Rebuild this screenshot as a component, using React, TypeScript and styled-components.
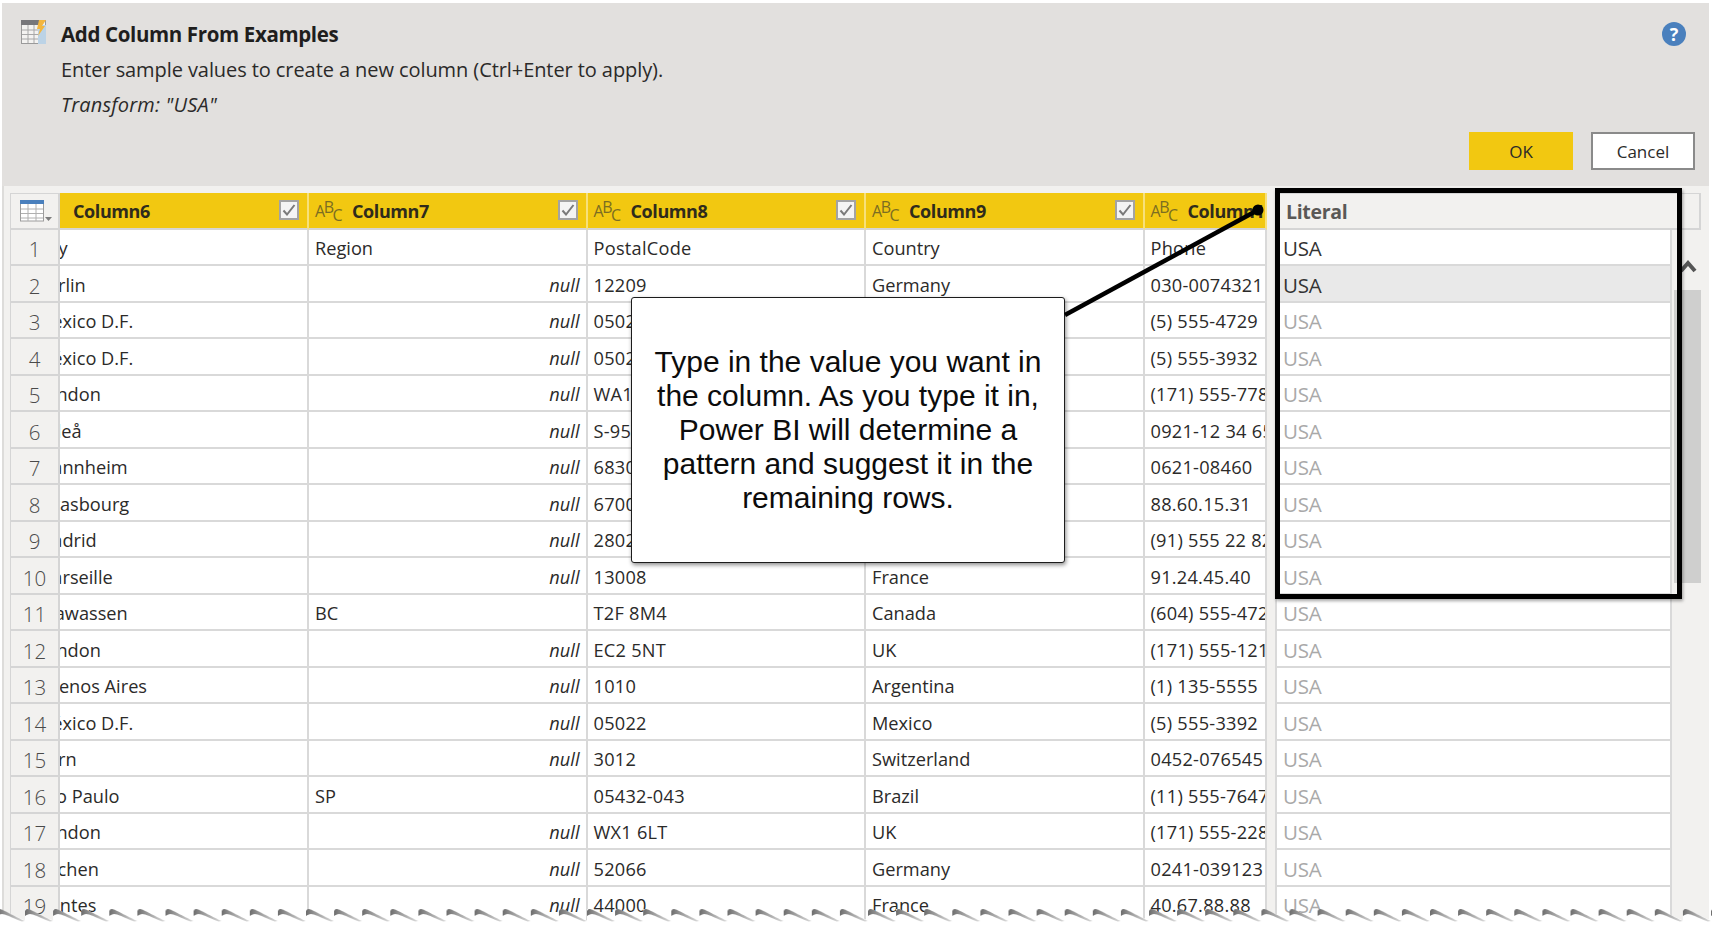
import { Fragment } from 'react'
import styled, { createGlobalStyle } from 'styled-components'

const GlobalStyle = createGlobalStyle`
  html, body {
    margin: 0;
    padding: 0;
    background: #fff;
  }
  * {
    box-sizing: border-box;
  }
`

const uiFont = `'Open Sans', 'Noto Sans', sans-serif`

const Page = styled.div`
  position: relative;
  width: 1712px;
  height: 928px;
  overflow: hidden;
  background: #fff;
  padding: 3px 3px 0 2px;
  font-family: ${uiFont};
  color: #2b2a29;
`

const Header = styled.header`
  height: 183px;
  padding: 14px 14px 16px 19px;
  background: #e2e0de;
  display: flex;
  flex-direction: column;
`

const TopRow = styled.div`
  display: flex;
  align-items: flex-start;
  height: 105px;
`

const AddColumnIcon = styled.svg`
  flex: none;
  margin-top: 3px;
`

const HeaderText = styled.div`
  margin-left: 14px;
  flex: 1;
`

const Title = styled.div`
  font-size: 20.5px;
  font-weight: 700;
  line-height: 35px;
  letter-spacing: -0.36px;
  color: #1f1e1d;
`

const Line = styled.div<{ $italic?: boolean }>`
  font-size: 20px;
  line-height: 35px;
  letter-spacing: ${p => (p.$italic ? '0.2px' : '-0.08px')};
  font-style: ${p => (p.$italic ? 'italic' : 'normal')};
`

const Help = styled.div`
  width: 24px;
  height: 24px;
  margin: 5px 9px 0 0;
  border-radius: 50%;
  background: #4a80bd;
  color: #fff;
  font-size: 18px;
  font-weight: 700;
  line-height: 24px;
  text-align: center;
`

const Buttons = styled.div`
  display: flex;
  justify-content: flex-end;
  gap: 18px;
  margin-top: 10px;
`

const Button = styled.div<{ $primary?: boolean }>`
  width: 104px;
  height: 38px;
  display: flex;
  align-items: center;
  justify-content: center;
  font-size: 17px;
  background: ${p => (p.$primary ? '#f2c811' : '#fff')};
  border: ${p => (p.$primary ? 'none' : '2px solid #8a8a8a')};
`

const Panel = styled.div`
  height: 742px;
  padding: 7px 8px 0 6px;
  background: #f2f1ef;
  border-left: 2px solid #dddcda;
  display: flex;
  align-items: flex-start;
`

const DataGrid = styled.div`
  display: grid;
  grid-template-columns: 50px 249px 278.5px 278.5px 278.5px 122.5px;
  grid-template-rows: 36.5px;
  grid-auto-rows: 36.5px;
`

const Corner = styled.div`
  background: #f2f1ef;
  border: 1px solid #d5d5d5;
  border-width: 1px 2px 2px 1px;
  padding: 6px 0 0 9px;
`

const HeadCell = styled.div<{ $first?: boolean }>`
  display: flex;
  align-items: center;
  min-width: 0;
  overflow: hidden;
  background: #f2c811;
  border-right: 2px solid #f7e07a;
  border-bottom: 2px solid #d5d5d5;
  padding: 0 8px 0 ${p => (p.$first ? '13px' : '6px')};
`

const TypeIcon = styled.span`
  display: inline-flex;
  flex: none;
  width: 25px;
  margin-right: 12px;
  font-size: 16px;
  letter-spacing: -1.5px;
  color: #7b6d22;
  line-height: 1;
`

const TypeLetter = styled.span<{ $shift: number }>`
  transform: translateY(${p => p.$shift}px);
`

const ColumnName = styled.span`
  flex: 1;
  font-size: 18px;
  font-weight: 700;
  letter-spacing: -0.4px;
  white-space: nowrap;
  color: #2f2b1c;
  padding-top: 2px;
`

const CheckBox = styled.span`
  flex: none;
  width: 20px;
  height: 20px;
  background: #f4f4f4;
  border: 2px solid #a3a3a3;
  display: flex;
  align-items: center;
  justify-content: center;
`

const RowNumber = styled.div`
  background: #f2f1ef;
  border: 1px solid #d5d5d5;
  border-width: 0 2px 2px 1px;
  font-size: 20.5px;
  font-weight: 300;
  color: #4a4a4a;
  display: flex;
  align-items: center;
  justify-content: center;
  padding-top: 5px;
`

const Cell = styled.div<{ $null?: boolean; $numeric?: boolean }>`
  min-width: 0;
  overflow: hidden;
  white-space: nowrap;
  background: #fff;
  border-right: 2px solid #d9d9d9;
  border-bottom: 2px solid #d9d9d9;
  padding: 3px 6px 0;
  display: flex;
  align-items: center;
  justify-content: ${p => (p.$null ? 'flex-end' : 'flex-start')};
  font-size: 18.2px;
  letter-spacing: ${p => (p.$numeric ? '0.25px' : '0')};
  font-style: ${p => (p.$null ? 'italic' : 'normal')};
`

/* the city column is scrolled sideways, so every value loses its first letters */
const ScrolledText = styled.span`
  margin-left: -30px;
`

const LiteralPane = styled.div`
  width: 426px;
  margin-left: 8px;
`

const LiteralHeader = styled.div`
  height: 36.5px;
  display: flex;
  align-items: center;
  padding: 2px 0 0 9px;
  background: #f2f1ef;
  border: 2px solid #d5d5d5;
  border-top-width: 1px;
  font-size: 19.5px;
  font-weight: 700;
  letter-spacing: -0.3px;
  color: #5a5856;
`

const LiteralBody = styled.div`
  display: flex;
  align-items: flex-start;
`

const LiteralCells = styled.div`
  width: 397px;
  flex: none;
`

const LiteralCell = styled.div<{ $state: 'typed' | 'active' | 'suggested' }>`
  height: 36.5px;
  display: flex;
  align-items: center;
  padding: 3px 0 0 6px;
  background: ${p => (p.$state === 'active' ? '#e9e9e9' : '#fff')};
  border: 2px solid #d9d9d9;
  border-width: 0 2px 2px 2px;
  font-size: 20.5px;
  letter-spacing: -0.2px;
  color: ${p => (p.$state === 'suggested' ? '#a9a9a9' : '#333')};
`

const Scrollbar = styled.div`
  flex: 1;
  padding-top: 29.5px;
  display: flex;
  flex-direction: column;
`

const Chevron = styled.svg`
  display: block;
  margin-left: 7px;
`

const Thumb = styled.div`
  height: 293px;
  margin: 17px 0 0 2px;
  background: #cfcfce;
`

const HighlightBox = styled.div`
  position: absolute;
  left: 1274.5px;
  top: 188px;
  width: 407.5px;
  height: 411px;
  border: 5.5px solid #000;
  box-shadow: 1px 2px 3px rgba(0, 0, 0, 0.35);
`

const Connector = styled.svg`
  position: absolute;
  left: 1040px;
  top: 190px;
`

const Callout = styled.div`
  position: absolute;
  left: 631px;
  top: 297px;
  width: 434px;
  height: 266px;
  padding: 0 20px;
  display: flex;
  align-items: center;
  justify-content: center;
  text-align: center;
  background: #fff;
  border: 1.5px solid #1c1c1c;
  border-radius: 3px;
  box-shadow: 1px 2px 4px rgba(0, 0, 0, 0.45);
  font-family: 'Liberation Sans', Arial, sans-serif;
  font-size: 30px;
  line-height: 34px;
  color: #0c0c0c;
`

const TornEdge = styled.svg`
  position: absolute;
  left: 0;
  bottom: 0;
`

type Row = [string, string | null, string, string, string]

const rows: Row[] = [
  ['City', 'Region', 'PostalCode', 'Country', 'Phone'],
  ['Berlin', null, '12209', 'Germany', '030-0074321'],
  ['México D.F.', null, '05021', 'Mexico', '(5) 555-4729'],
  ['México D.F.', null, '05023', 'Mexico', '(5) 555-3932'],
  ['London', null, 'WA1 1DP', 'UK', '(171) 555-7788'],
  ['Luleå', null, 'S-958 22', 'Sweden', '0921-12 34 65'],
  ['Mannheim', null, '68306', 'Germany', '0621-08460'],
  ['Strasbourg', null, '67000', 'France', '88.60.15.31'],
  ['Madrid', null, '28023', 'Spain', '(91) 555 22 82'],
  ['Marseille', null, '13008', 'France', '91.24.45.40'],
  ['Tsawassen', 'BC', 'T2F 8M4', 'Canada', '(604) 555-4729'],
  ['London', null, 'EC2 5NT', 'UK', '(171) 555-1212'],
  ['Buenos Aires', null, '1010', 'Argentina', '(1) 135-5555'],
  ['México D.F.', null, '05022', 'Mexico', '(5) 555-3392'],
  ['Bern', null, '3012', 'Switzerland', '0452-076545'],
  ['São Paulo', 'SP', '05432-043', 'Brazil', '(11) 555-7647'],
  ['London', null, 'WX1 6LT', 'UK', '(171) 555-2282'],
  ['Aachen', null, '52066', 'Germany', '0241-039123'],
  ['Nantes', null, '44000', 'France', '40.67.88.88'],
]

const TableIcon = () => (
  <svg width="34" height="23" viewBox="0 0 34 23">
    <rect x="0.5" y="1" width="23" height="20" fill="#fff" stroke="#9c9c9c" />
    <rect x="0" y="0" width="24" height="4" fill="#4a80bd" />
    <path d="M1 9h22M1 13.5h22M1 18h22M8 4v17M16 4v17" stroke="#b0b0b0" strokeWidth="1" fill="none" />
    <path d="M25 17h7l-3.5 4z" fill="#7d7d7d" />
  </svg>
)

const CheckMark = () => (
  <svg width="14" height="12" viewBox="0 0 14 12">
    <path d="M1.5 6.5L5 10.5L12.5 1" fill="none" stroke="#7a7a7a" strokeWidth="2" />
  </svg>
)

const AbcIcon = () => (
  <TypeIcon>
    <TypeLetter $shift={1}>A</TypeLetter>
    <TypeLetter $shift={-3}>B</TypeLetter>
    <TypeLetter $shift={5}>C</TypeLetter>
  </TypeIcon>
)

function literalState(index: number) {
  if (index === 0) return 'typed'
  if (index === 1) return 'active'
  return 'suggested'
}

function App() {
  return (
    <Page>
      <GlobalStyle />
      <Header>
        <TopRow>
          <AddColumnIcon width="26" height="25" viewBox="0 0 26 25">
            <rect x="0.5" y="0.5" width="24" height="23" fill="#f4f3f1" stroke="#9a9a9a" />
            <rect x="0" y="0" width="18" height="5" fill="#77777a" />
            <rect x="17" y="5" width="8" height="19" fill="#bcd3e6" />
            <path d="M1 10h16M1 14.5h16M1 19h16M7 5v18M13 5v18" stroke="#a8a8a8" strokeWidth="1" fill="none" />
            <path d="M18 0h7l-4 6h3l-7 10 2-7h-3z" fill="#f3b63f" />
          </AddColumnIcon>
          <HeaderText>
            <Title>Add Column From Examples</Title>
            <Line>Enter sample values to create a new column (Ctrl+Enter to apply).</Line>
            <Line $italic>Transform: "USA"</Line>
          </HeaderText>
          <Help>?</Help>
        </TopRow>
        <Buttons>
          <Button $primary>OK</Button>
          <Button>Cancel</Button>
        </Buttons>
      </Header>

      <Panel>
        <DataGrid>
          <Corner>
            <TableIcon />
          </Corner>
          <HeadCell $first>
            <ColumnName>Column6</ColumnName>
            <CheckBox><CheckMark /></CheckBox>
          </HeadCell>
          {['Column7', 'Column8', 'Column9', 'Column10'].map(name => (
            <HeadCell key={name}>
              <AbcIcon />
              <ColumnName>{name}</ColumnName>
              <CheckBox><CheckMark /></CheckBox>
            </HeadCell>
          ))}
          {rows.map((row, i) => (
            <Fragment key={i}>
              <RowNumber>{i + 1}</RowNumber>
              <Cell><ScrolledText>{row[0]}</ScrolledText></Cell>
              <Cell $null={row[1] === null}>{row[1] ?? 'null'}</Cell>
              <Cell $numeric>{row[2]}</Cell>
              <Cell>{row[3]}</Cell>
              <Cell $numeric>{row[4]}</Cell>
            </Fragment>
          ))}
        </DataGrid>

        <LiteralPane>
          <LiteralHeader>Literal</LiteralHeader>
          <LiteralBody>
            <LiteralCells>
              {rows.map((_, i) => (
                <LiteralCell key={i} $state={literalState(i)}>USA</LiteralCell>
              ))}
            </LiteralCells>
            <Scrollbar>
              <Chevron width="18" height="14" viewBox="0 0 18 14">
                <path d="M2 12L9 4L16 12" fill="none" stroke="#555" strokeWidth="4" />
              </Chevron>
              <Thumb />
            </Scrollbar>
          </LiteralBody>
        </LiteralPane>
      </Panel>

      <Callout>Type in the value you want in the column. As you type it in, Power BI will determine a pattern and suggest it in the remaining rows.</Callout>
      <HighlightBox />
      <Connector width="230" height="140" viewBox="0 0 230 140">
        <path d="M25 125L218 20" stroke="#000" strokeWidth="4.5" fill="none" />
        <circle cx="218" cy="20" r="5.5" fill="#000" />
      </Connector>

      <TornEdge width="1712" height="24" viewBox="0 0 1712 24">
        <defs>
          <linearGradient id="curl" x1="0" y1="0" x2="1" y2="0">
            <stop offset="0" stopColor="#6c6c6c" />
            <stop offset="0.35" stopColor="#999" />
            <stop offset="1" stopColor="#dcdcdc" />
          </linearGradient>
          <filter id="soft" x="-10%" y="-10%" width="120%" height="120%">
            <feGaussianBlur stdDeviation="0.5" />
          </filter>
          <pattern id="tear" width="28.1" height="24" patternUnits="userSpaceOnUse" x="25">
            <path d="M0 5C3 4.500 8 7 12 9L28.1 16.5V24H0Z" fill="#fff" />
            <path d="M0 12C-0.500 8 0 4.500 3 5C7 6 12 9.500 28 17L25 17.500C14 13 8 10 5 10C3 10 1.500 11 0 12Z" fill="url(#curl)" filter="url(#soft)" />
          </pattern>
        </defs>
        <rect width="1712" height="24" fill="url(#tear)" />
      </TornEdge>
    </Page>
  )
}

export default App
